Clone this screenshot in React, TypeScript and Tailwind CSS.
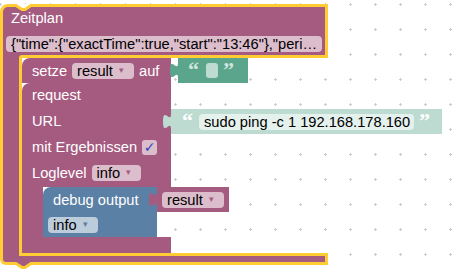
import React from "react";

// Blockly-Farben (geras)
const sans = "font-['Liberation_Sans',Arial,sans-serif]";

function Grid() {
  return (
    <svg className="absolute inset-0" width="461" height="278">
      <defs>
        <pattern id="grid" width="25" height="25" x="-12" y="-8" patternUnits="userSpaceOnUse">
          <path d="M11 12.5h3M12.5 11v3" stroke="#cccccc" strokeWidth="1" />
        </pattern>
      </defs>
      <rect width="100%" height="100%" fill="url(#grid)" />
    </svg>
  );
}

// Puzzle-Tab links an einem Wert-Block
function Tab({ fill }: { fill: string }) {
  return (
    <svg className="absolute -left-[8px] top-0" width="9" height="25" viewBox="0 0 9 25">
      <path d="M9 5H8C8 15 0 -3 0 12.5C0 28 8 10 8 20H9Z" fill={fill} />
    </svg>
  );
}

function Dropdown({ label, className, arrow }: { label: string; className: string; arrow: string }) {
  return (
    <div className={`flex h-[16px] shrink-0 items-center rounded-[4px] pl-[5px] text-black ${className}`}>
      <span>{label}</span>
      <span className={`ml-[6px] text-[9px] ${arrow}`}>▾</span>
    </div>
  );
}

function Quote({ open, className }: { open?: boolean; className: string }) {
  return (
    <span className={`font-['Liberation_Serif',serif] text-[22px] font-bold leading-none ${className}`}>
      {open ? "“" : "”"}
    </span>
  );
}

function Row({ children, extra }: { children: React.ReactNode; extra?: React.ReactNode }) {
  return (
    <div className="flex h-[26px]">
      <div className="flex w-[149px] shrink-0 items-center bg-[#a55b80] pb-[2px] pl-[10px] text-white">
        {children}
      </div>
      {extra}
    </div>
  );
}

function SetBlock() {
  return (
    <div className="flex h-[25px]">
      <div className="flex w-[149px] shrink-0 items-center rounded-tl-[8px] bg-[#a55b80] pl-[10px] text-white">
        <span>setze</span>
        <Dropdown label="result" className="ml-[5px] w-[62px] bg-[#dbbdcc]" arrow="text-[#a55b80]" />
        <span className="ml-[5px]">auf</span>
      </div>
      <div className="relative ml-[7px] flex h-[25px] w-[70px] shrink-0 items-center bg-[#5ba58c] pl-[10px]">
        <Tab fill="#5ba58c" />
        <Quote open className="-mt-[2px] text-[#cfe5dd]" />
        <div className="ml-[7px] h-[15px] w-[12px] rounded-[3px] bg-[#bddbd1]" />
        <Quote className="-mt-[2px] ml-[5px] text-[#cfe5dd]" />
      </div>
    </div>
  );
}

function UrlBlock() {
  return (
    <div className="relative flex h-[25px] w-[271px] shrink-0 items-center bg-[#bddbd1] pl-[11px]">
      <Tab fill="#bddbd1" />
      <Quote open className="-mt-[2px] text-white" />
      <div className="ml-[6px] flex h-[16px] w-[215px] items-center rounded-[4px] bg-[#e5f1ed] pl-[5px] text-black">
        sudo ping -c 1 192.168.178.160
      </div>
      <Quote className="-mt-[2px] ml-[5px] text-white" />
    </div>
  );
}

function DebugBlock() {
  return (
    <div className="flex flex-col">
      <div className="flex h-[25px]">
        <div className="flex w-[114px] shrink-0 items-center rounded-tl-[8px] bg-[#5b80a5] pl-[10px] text-white">
          debug output
        </div>
        <div className="relative flex h-[25px] w-[72px] shrink-0 items-center bg-[#a55b80] pl-[5px]">
          <Tab fill="#a55b80" />
          <Dropdown label="result" className="w-[62px] bg-[#dbbdcc]" arrow="text-[#a55b80]" />
        </div>
      </div>
      <div className="flex h-[25px] w-[114px] items-center bg-[#5b80a5] pl-[5px]">
        <Dropdown label="info" className="w-[50px] bg-[#bdccdb]" arrow="text-[#5b80a5]" />
      </div>
    </div>
  );
}

function RequestBlock() {
  return (
    <div className="flex flex-col">
      <div className="flex h-[26px] w-[149px] items-center rounded-tl-[8px] bg-[#a55b80] pb-[2px] pl-[10px] text-white">
        request
      </div>
      <Row extra={<UrlBlock />}>URL</Row>
      <Row>
        <span>mit Ergebnissen</span>
        <span className="ml-[5px] flex h-[15px] w-[15px] items-center justify-center rounded-[3px] bg-[#dbbdcc] font-['DejaVu_Sans',sans-serif] text-[14px] leading-none text-[#3048b8]">
          ✓
        </span>
      </Row>
      <Row>
        <span>Loglevel</span>
        <Dropdown label="info" className="ml-[5px] w-[49px] bg-[#dbbdcc]" arrow="text-[#a55b80]" />
      </Row>
      <div className="flex">
        <div className="w-[21px] shrink-0 bg-[#a55b80]" />
        <DebugBlock />
      </div>
      <div className="h-[16px] w-[149px] bg-[#a55b80]" />
    </div>
  );
}

function ScheduleBlock() {
  return (
    <div className="relative flex w-[328px] flex-col">
      <div className="rounded-tl-[8px] border-[3px] border-b-0 border-[#ffcc33] bg-[#a55b80]">
        <div className="mt-[1px] h-[20px] pl-[8px] leading-[20px] text-white">Zeitplan</div>
        <div className="mx-[3px] mt-[8px] flex h-[16px] items-center overflow-hidden whitespace-nowrap rounded-[4px] bg-[#dbbdcc] pl-[5px] text-black">
          {'{"time":{"exactTime":true,"start":"13:46"},"peri…'}
        </div>
        <div className="mt-[3px] flex h-[3px]">
          <div className="w-[16px]" />
          <div className="flex-1 rounded-tl-[3px] bg-[#ffcc33]" />
        </div>
      </div>

      <div className="flex">
        <div className="w-[22px] shrink-0 border-x-[3px] border-[#ffcc33] bg-[#a55b80]" />
        <div className="flex flex-col whitespace-nowrap">
          <SetBlock />
          <RequestBlock />
        </div>
      </div>

      <div className="rounded-bl-[6px] border-[3px] border-t-0 border-[#ffcc33] bg-[#a55b80]">
        <div className="flex h-[3px]">
          <div className="w-[16px]" />
          <div className="flex-1 bg-[#ffcc33]" />
        </div>
        <div className="h-[6px]" />
      </div>

      {/* Kerbe oben / Nase unten */}
      <svg className="absolute left-[14px] top-0" width="20" height="9">
        <polygon points="2,-1 2,1.5 8,5.5 11,5.5 17,1.5 17,-1" fill="#ffffff" />
        <polyline points="0,1.5 2,1.5 8,5.5 11,5.5 17,1.5 20,1.5" fill="none" stroke="#ffcc33" strokeWidth="3" />
      </svg>
      <svg className="absolute -bottom-[7px] left-[14px]" width="20" height="10">
        <polygon points="2,-1 2,1.5 8,5.5 11,5.5 17,1.5 17,-1" fill="#a55b80" />
        <polyline points="0,1.5 2,1.5 8,5.5 11,5.5 17,1.5 20,1.5" fill="none" stroke="#ffcc33" strokeWidth="3" />
      </svg>
    </div>
  );
}

export default function App() {
  return (
    <div className={`relative h-[278px] w-[461px] overflow-hidden bg-white text-[14.67px] ${sans}`}>
      <Grid />
      <div className="absolute left-0 top-[4px]">
        <ScheduleBlock />
      </div>
    </div>
  );
}
